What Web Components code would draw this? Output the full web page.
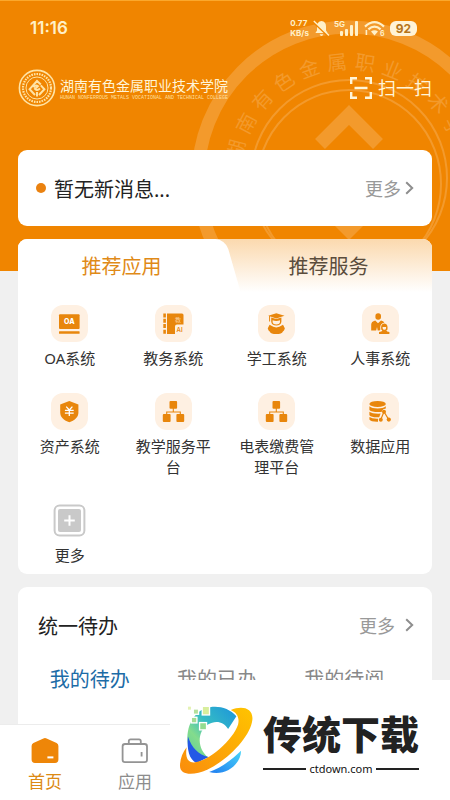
<!DOCTYPE html>
<html lang="zh-CN">
<head>
<meta charset="UTF-8">
<meta name="viewport" content="width=device-width, initial-scale=1">
<title>首页</title>
<style>
  body {
    margin: 0;
    background: #f0f0f0;
    color: #333;
    font-family: "Noto Sans", "Noto Sans CJK SC", sans-serif;
  }
</style>
</head>
<body>
<portal-app>
  <portal-hero slot="hero">
    <status-bar time="11:16" battery="92"></status-bar>
    <school-header></school-header>
  </portal-hero>
  <notice-card>暂无新消息...</notice-card>
  <app-panel>
    <app-item icon="oa">OA系统</app-item>
    <app-item icon="book">教务系统</app-item>
    <app-item icon="student">学工系统</app-item>
    <app-item icon="people">人事系统</app-item>
    <app-item icon="shield">资产系统</app-item>
    <app-item icon="tree">教学服务平台</app-item>
    <app-item icon="tree">电表缴费管理平台</app-item>
    <app-item icon="data">数据应用</app-item>
    <app-item icon="plus" plain>更多</app-item>
  </app-panel>
  <todo-card></todo-card>
  <tab-bar slot="nav">
    <tab-item icon="home" active>首页</tab-item>
    <tab-item icon="bag">应用</tab-item>
  </tab-bar>
  <site-mark slot="mark">传统下载</site-mark>
</portal-app>

<script>
  const RESET = `
    :host, * { box-sizing: border-box; }
    button {
      margin: 0; padding: 0; border: 0;
      background: none; color: inherit; font: inherit;
      cursor: pointer;
    }
    svg { display: block; flex: none; }
  `;

  const CHEVRON = `
    <svg width="9" height="14" viewBox="0 0 9 14" fill="none" stroke="#8e8e8e" stroke-width="2">
      <path d="M1.2 1.2 7.2 7 1.2 12.8"/>
    </svg>`;

  const TREE = `
    <rect x="14.5" y="8" width="7.6" height="7.8" rx="1"/>
    <rect x="7.8" y="21" width="7.8" height="8" rx="1"/>
    <rect x="21.4" y="21" width="7.8" height="8" rx="1"/>
    <path d="M18.3 15V19M11.7 21.5V19H25.3V21.5" fill="none" stroke="#e8860c" stroke-width="1.1"/>`;

  const APP_ICONS = {
    oa: `
      <rect x="8" y="9.3" width="20.6" height="14.8" rx="1"/>
      <rect x="8" y="26.2" width="20.6" height="2.6" rx=".6"/>
      <text x="18.3" y="19.4" font-family="Inter, sans-serif" font-size="7" font-weight="800" text-anchor="middle" fill="#fff">OA</text>`,
    book: `
      <path d="M8.3 8.6h2.6v4H8.3zM8.3 13.8h2.6v4H8.3zM8.3 19h2.6v4H8.3zM8.3 24.8h2.6v4H8.3z"/>
      <path d="M12 8.5H27a1.5 1.5 0 0 1 1.5 1.5V19.4H22a2 2 0 0 0-2 2V29H12Z"/>
      <text x="23" y="16.6" font-size="6" text-anchor="middle" fill="#fbd3a0">教</text>
      <text x="24.6" y="27" font-family="Inter, sans-serif" font-size="6" font-weight="600" text-anchor="middle">AI</text>`,
    student: `
      <path d="M18.3 8.2 26.5 10.8 18.3 13.4 10.2 10.8Z"/>
      <path d="M11.6 11V16.5" fill="none" stroke="#e8860c" stroke-width="1"/>
      <path d="M13.2 12.4V16.6C13.2 19 15.4 20.6 18.3 20.6S23.4 19 23.4 16.6V12.4L18.3 14Z M14.6 15.3V17.3C15 19 16.4 19.5 18.3 19.5S21.6 19 22 17.3V15.3Q18.3 16.6 14.6 15.3Z" fill-rule="evenodd"/>
      <path d="M11.6 19.8Q15.6 22.4 18.3 22.4T25 19.8L26.2 22Q27.6 23.4 26 25.4L24.9 26.4Q23.8 29 18.3 29T11.7 26.4L10.6 25.4Q9 23.4 10.4 22Z"/>`,
    people: `
      <rect x="13.4" y="8.2" width="5.6" height="6.6" rx="2.7"/>
      <path d="M9.2 25.5V19.5Q9.2 16.4 13.2 15.4L16 18.2 19 15.4Q21.4 15.8 22.4 17.4 18.2 18.4 18.2 22.4L18.4 24.6 17.6 25.5H15.7L15 22 14.2 25.5Z"/>
      <path d="M19.2 24.4Q18.4 18.4 22.3 18.4T25.5 24.4L24.3 25.4Q24.6 26.4 27.4 27V29H17V27Q20 26.6 20.4 25.4Z M20.6 22V23.2Q21 24.8 22.4 24.8T24.1 23.2V22Z" fill-rule="evenodd"/>`,
    shield: `
      <path d="M18.3 8 27.4 11.6V19.5C27.4 24.5 23.4 27.6 18.3 29.2 13.2 27.6 9.2 24.5 9.2 19.5V11.6Z"/>
      <path d="M15.2 13.6 18.3 17 21.4 13.6M18.3 17V23M13.9 17.4H22.7M13.9 20.2H22.7" fill="none" stroke="#fff" stroke-width="1.3"/>`,
    tree: TREE,
    data: `
      <ellipse cx="15.6" cy="10.9" rx="8.2" ry="3"/>
      <path d="M7.4 13.2Q10 15.4 15.6 15.4T23.8 13.2V15.4Q20.8 15.6 19.8 18.2L19.7 19Q10 19.6 7.4 17Z"/>
      <path d="M7.4 18.8Q10.4 21 18.6 20.6L17.2 24.2Q10 24.8 7.4 22.2Z"/>
      <path d="M7.4 24Q10 26 16 25.8L16 28.8Q9 29 7.4 26.6Z"/>
      <path d="M22 18.8 18.8 26.4M22 18.8 26.6 26.4" fill="none" stroke="#e8860c" stroke-width="1.2"/>
      <circle cx="22" cy="18.8" r="2"/><circle cx="18.8" cy="26.8" r="2"/><circle cx="26.8" cy="26.6" r="2.1"/>`,
    plus: `
      <rect x="3.6" y="3.6" width="29.8" height="29.8" rx="5" fill="none" stroke="#c9c9c9" stroke-width="2"/>
      <rect x="7" y="7" width="23" height="23" rx="2" fill="#c9c9c9"/>
      <path d="M18.5 13.2V23.8M13.2 18.5H23.8" stroke="#fff" stroke-width="2"/>`
  };

  class PortalApp extends HTMLElement {
    constructor() {
      super();
      this.attachShadow({ mode: "open" });
    }

    connectedCallback() {
      this.shadowRoot.innerHTML = `
        <style>
          ${RESET}
          :host {
            display: flex;
            flex-direction: column;
            height: 100vh;
            position: relative;
          }
          .page {
            flex: 1;
            min-height: 0;
            overflow: hidden;
            display: grid;
            align-content: start;
          }
          main {
            display: grid;
            gap: 13px;
            padding: 0 18px;
            margin-top: -121px;
            position: relative;
          }
        </style>
        <div class="page">
          <slot name="hero"></slot>
          <main><slot></slot></main>
        </div>
        <slot name="nav"></slot>
        <slot name="mark"></slot>
      `;
    }
  }

  class PortalHero extends HTMLElement {
    constructor() {
      super();
      this.attachShadow({ mode: "open" });
    }

    connectedCallback() {
      // characters of the crest, spread along the ring
      const ring = [..."湖南有色金属职业技术学"].map((c, i) => {
        const angle = -76 + i * 14;
        return `<text transform="rotate(${angle} 160 160)" x="160" y="51" text-anchor="middle">${c}</text>`;
      }).join("");

      this.shadowRoot.innerHTML = `
        <style>
          ${RESET}
          :host {
            display: flex;
            flex-direction: column;
            height: 271px;
            background: #f08500;
            border-top: 1px solid #fba82c;
            position: relative;
            overflow: hidden;
          }
          .crest {
            position: absolute;
            top: 17px;
            right: -59px;
          }
          ::slotted(*) { position: relative; }
        </style>
        <svg class="crest" width="320" height="320" viewBox="0 0 320 320" fill="none" stroke="#f39a2c" aria-hidden="true">
          <circle cx="160" cy="160" r="151" stroke-width="13"/>
          <circle cx="160" cy="160" r="98" stroke-width="2"/>
          <ellipse cx="160" cy="166" rx="92" ry="94" stroke-width="2"/>
          <path d="M131 126 160 97 189 126" stroke-width="14"/>
          <path d="M132 194H188L160 222Z" fill="#f39a2c" stroke="none"/>
          <g fill="#f39a2c" stroke="none" font-size="20">${ring}</g>
        </svg>
        <slot></slot>
      `;
    }
  }

  class StatusBar extends HTMLElement {
    constructor() {
      super();
      this.attachShadow({ mode: "open" });
    }

    connectedCallback() {
      const time = this.getAttribute("time") || '';
      const battery = this.getAttribute("battery") || '';

      this.shadowRoot.innerHTML = `
        <style>
          ${RESET}
          :host {
            display: flex;
            align-items: center;
            justify-content: space-between;
            height: 54px;
            padding: 0 33px 0 30px;
            color: #fff0c8;
            font-family: Inter, sans-serif;
          }
          .time { font-size: 17px; font-weight: 600; }
          .right { display: flex; align-items: center; gap: 4px; }
          .speed {
            font-size: 8px;
            line-height: 10px;
            font-weight: 700;
          }
          .speed span { display: block; }
          .signal { display: flex; align-items: flex-start; }
          .signal span { font-size: 8px; line-height: 8px; font-weight: 700; }
          .signal svg { margin-left: -5px; }
          .battery {
            width: 27px;
            border-radius: 6px;
            background: #fff3d6;
            color: #b5741a;
            font-size: 12px;
            line-height: 15px;
            font-weight: 700;
            text-align: center;
          }
        </style>
        <span class="time">${time}</span>
        <div class="right">
          <div class="speed"><span>0.77</span><span>KB/s</span></div>
          <svg width="17" height="17" viewBox="0 0 17 17">
            <path d="M8.5 1Q13 1.6 13 6.6V10.4L14.6 13H2.4L4 10.4V6.6Q4 1.6 8.5 1ZM6.6 14.2H10.4Q9.8 16 8.5 16T6.6 14.2Z" fill="#fff0c8"/>
            <path d="M.8 2.4 15.2 16" stroke="#f08500" stroke-width="2"/>
            <path d="M.8 1 16 15.4" stroke="#fff0c8" stroke-width="1.4"/>
          </svg>
          <div class="signal">
            <span>5G</span>
            <svg width="20" height="16" viewBox="0 0 20 16" fill="#fff0c8">
              <rect x="0" y="11" width="3" height="5" rx="1"/><rect x="5" y="9" width="3" height="7" rx="1"/>
              <rect x="10" y="5" width="3" height="11" rx="1"/><rect x="15" y="1" width="3" height="15" rx="1"/>
            </svg>
          </div>
          <svg width="22" height="17" viewBox="0 0 22 17" fill="none" stroke="#fff0c8" stroke-width="2.2">
            <path d="M1 6.6Q10.5-2.4 20 6.6M4.4 9.4Q10.5 4 16.6 9.4"/>
            <path d="M10.5 15.4 7 11.6Q10.5 9 14 11.6Z" fill="#fff0c8" stroke="none"/>
            <path d="M2.4 10V15" stroke-width="1.6"/>
            <text x="16" y="16" font-size="7" font-weight="700" fill="#fff0c8" stroke="none">6</text>
          </svg>
          <span class="battery">${battery}</span>
        </div>
      `;
    }
  }

  class SchoolHeader extends HTMLElement {
    constructor() {
      super();
      this.attachShadow({ mode: "open" });
    }

    connectedCallback() {
      this.shadowRoot.innerHTML = `
        <style>
          ${RESET}
          :host {
            display: flex;
            align-items: center;
            justify-content: space-between;
            height: 66px;
            padding: 0 18px;
            color: #fff5d8;
          }
          .brand { display: flex; align-items: center; gap: 4px; }
          .name { font-family: "Noto Sans CJK SC", sans-serif; font-size: 14px; line-height: 20px; }
          .en {
            font-family: "Liberation Mono", monospace;
            font-size: 5px;
            line-height: 7px;
            color: #ffdf9c;
            white-space: nowrap;
          }
          .scan { display: flex; align-items: center; gap: 5px; font-size: 18px; line-height: 26px; }
        </style>
        <div class="brand">
          <svg width="38" height="38" viewBox="0 0 38 38" fill="none" stroke="#ffe3a4">
            <circle cx="19" cy="19" r="17.6" stroke-width="1.6"/>
            <circle cx="19" cy="19" r="14" stroke-width="2.2" stroke-dasharray="1.6 1"/>
            <circle cx="19" cy="19" r="11" stroke-width="1"/>
            <path d="M17 26 11.6 20.2 19 12 22.8 15.6M21 26 26.4 20.2 22.8 16.4M15.6 18.4Q17.6 15.4 20 17.2L17 20Q18.6 22.2 22 19.4M19 27.4V23" stroke-width="2"/>
          </svg>
          <div>
            <div class="name">湖南有色金属职业技术学院</div>
            <div class="en">HUNAN NONFERROUS METALS VOCATIONAL AND TECHNICAL COLLEGE</div>
          </div>
        </div>
        <button class="scan" type="button">
          <svg width="24" height="24" viewBox="0 0 24 24" fill="none" stroke="#fff5d8" stroke-width="2.4">
            <path d="M8 2.2H2.2V8M16 2.2H21.8V8M8 21.8H2.2V16M16 21.8H21.8V16M5.5 12H18.5"/>
          </svg>
          <span>扫一扫</span>
        </button>
      `;
    }
  }

  class NoticeCard extends HTMLElement {
    constructor() {
      super();
      this.attachShadow({ mode: "open" });
    }

    connectedCallback() {
      this.shadowRoot.innerHTML = `
        <style>
          ${RESET}
          :host {
            display: flex;
            align-items: center;
            gap: 8px;
            height: 76px;
            padding: 0 18px;
            background: #fff;
            border-radius: 9px;
            font-size: 20px;
            color: #222;
          }
          i { width: 10px; height: 10px; border-radius: 50%; background: #ea8210; }
          .text { flex: 1; }
          button { display: flex; align-items: center; gap: 4px; font-size: 18px; color: #999; }
        </style>
        <i></i>
        <span class="text"><slot></slot></span>
        <button type="button">更多 ${CHEVRON}</button>
      `;
    }
  }

  class AppPanel extends HTMLElement {
    constructor() {
      super();
      this.attachShadow({ mode: "open" });
    }

    connectedCallback() {
      this.shadowRoot.innerHTML = `
        <style>
          ${RESET}
          :host {
            display: block;
            background: #fff;
            border-radius: 9px;
            overflow: hidden;
          }
          .tabs {
            display: grid;
            grid-template-columns: 1fr 1fr;
            height: 53px;
            background: linear-gradient(#fbd9ae, #fff);
            font-size: 20px;
          }
          .tabs button { position: relative; color: #5a4c3c; }
          .tabs .on {
            margin-right: 16px;
            padding-left: 16px;
            color: #e08a18;
            background: #fff;
          }
          /* slanted edge of the open tab */
          .on::after {
            content: "";
            position: absolute;
            top: 0; right: -24px; bottom: 0;
            width: 40px;
            background: #fff;
            border-top-right-radius: 10px;
            transform: skewX(16deg);
          }
          .grid {
            display: grid;
            grid-template-columns: repeat(4, 1fr);
            row-gap: 24px;
            padding: 13px 0 8px;
          }
        </style>
        <div class="tabs">
          <button class="on" type="button">推荐应用</button>
          <button type="button">推荐服务</button>
        </div>
        <div class="grid"><slot></slot></div>
      `;
    }
  }

  class AppItem extends HTMLElement {
    constructor() {
      super();
      this.attachShadow({ mode: "open" });
    }

    connectedCallback() {
      const icon = APP_ICONS[this.getAttribute("icon")] || '';

      this.shadowRoot.innerHTML = `
        <style>
          ${RESET}
          :host { display: block; padding: 0 12px; }
          button {
            display: flex;
            flex-direction: column;
            align-items: center;
            gap: 6px;
            width: 100%;
            font-size: 15px;
            line-height: 21px;
          }
          svg { background: #fef0e2; border-radius: 12px; }
          :host([plain]) svg { background: none; }
        </style>
        <button type="button">
          <svg width="37" height="37" viewBox="0 0 37 37" fill="#e8860c">${icon}</svg>
          <span><slot></slot></span>
        </button>
      `;
    }
  }

  class TodoCard extends HTMLElement {
    constructor() {
      super();
      this.attachShadow({ mode: "open" });
    }

    connectedCallback() {
      this.shadowRoot.innerHTML = `
        <style>
          ${RESET}
          :host {
            display: block;
            min-height: 200px;
            background: #fff;
            border-radius: 9px;
          }
          header {
            display: flex;
            align-items: center;
            justify-content: space-between;
            height: 76px;
            padding: 0 18px 0 20px;
          }
          h2 { margin: 0; font-size: 20px; font-weight: 400; color: #222; }
          header button { display: flex; align-items: center; gap: 10px; font-size: 18px; color: #999; }
          nav {
            display: grid;
            grid-template-columns: repeat(3, 1fr);
            padding: 0 24px 0 8px;
            font-size: 20px;
            line-height: 34px;
            color: #888;
          }
          nav .on { color: #1c6ba6; }
        </style>
        <header>
          <h2>统一待办</h2>
          <button type="button">更多 ${CHEVRON}</button>
        </header>
        <nav>
          <button class="on" type="button">我的待办</button>
          <button type="button">我的已办</button>
          <button type="button">我的待阅</button>
        </nav>
      `;
    }
  }

  class TabBar extends HTMLElement {
    constructor() {
      super();
      this.attachShadow({ mode: "open" });
    }

    connectedCallback() {
      this.shadowRoot.innerHTML = `
        <style>
          ${RESET}
          :host {
            display: grid;
            grid-template-columns: repeat(5, 1fr);
            height: 76px;
            background: #fff;
            border-top: 1px solid #ececec;
          }
        </style>
        <slot></slot>
      `;
    }
  }

  const TAB_ICONS = {
    home: `
      <path d="M12.4 1.4Q14 .6 15.6 1.4L25.6 6Q27.4 7 27.4 9V22.6Q27.4 26 24 26H4Q.6 26 .6 22.6V9Q.6 7 2.4 6Z" fill="#ee8608"/>
      <path d="M16.4 20.4H22.4" stroke="#fff" stroke-width="2"/>`,
    bag: `
      <rect x="1.6" y="7" width="24.4" height="18.2" rx="2.4" fill="none" stroke="#949494" stroke-width="1.8"/>
      <path d="M7.8 7V4.2Q7.8 2.4 9.6 2.4H18Q19.8 2.4 19.8 4.2V7M20.6 15V19.6" fill="none" stroke="#949494" stroke-width="1.8"/>`
  };

  class TabItem extends HTMLElement {
    constructor() {
      super();
      this.attachShadow({ mode: "open" });
    }

    connectedCallback() {
      this.shadowRoot.innerHTML = `
        <style>
          ${RESET}
          :host { display: block; color: #8c8c8c; }
          :host([active]) { color: #dc8a14; }
          button {
            display: flex;
            flex-direction: column;
            align-items: center;
            gap: 6px;
            width: 100%;
            padding-top: 12px;
            font-size: 17px;
            line-height: 24px;
          }
        </style>
        <button type="button">
          <svg width="28" height="27" viewBox="0 0 28 27">${TAB_ICONS[this.getAttribute("icon")] || ''}</svg>
          <span><slot></slot></span>
        </button>
      `;
    }
  }

  class SiteMark extends HTMLElement {
    constructor() {
      super();
      this.attachShadow({ mode: "open" });
    }

    connectedCallback() {
      this.shadowRoot.innerHTML = `
        <style>
          ${RESET}
          :host {
            display: flex;
            align-items: center;
            gap: 8px;
            position: absolute;
            right: 0; bottom: 0;
            width: 280px;
            height: 120px;
            padding-left: 8px;
            background: #fff;
            color: #222;
          }
          .title {
            font-family: "Noto Sans CJK SC", sans-serif;
            font-size: 39px;
            line-height: 58px;
            font-weight: 900;
          }
          .site {
            display: flex;
            align-items: center;
            gap: 3px;
            font-size: 11px;
            line-height: 16px;
            color: #111;
          }
          .site::before, .site::after {
            content: "";
            flex: 1;
            height: 2px;
            background: #222;
          }
        </style>
        <svg width="77" height="73" viewBox="25 70 230 220">
          <defs>
            <linearGradient id="c" x1="1" y1="0" x2="0" y2="1">
              <stop offset="0" stop-color="#1c94dc"/>
              <stop offset=".45" stop-color="#35bcc4"/>
              <stop offset=".7" stop-color="#84dc8c"/>
              <stop offset="1" stop-color="#58cc9c"/>
            </linearGradient>
            <linearGradient id="o" x1="1" y1="0" x2="0" y2="1">
              <stop offset="0" stop-color="#ffc400"/>
              <stop offset="1" stop-color="#fa8c0c"/>
            </linearGradient>
            <linearGradient id="b" x1="0" y1="1" x2="1" y2="0">
              <stop offset="0" stop-color="#1f7cf0"/>
              <stop offset="1" stop-color="#48d4f8"/>
            </linearGradient>
          </defs>
          <path d="M200 107C168 70 110 70 80 100C42 138 46 205 74 238L116 232C82 206 80 154 114 132C138 117 162 124 175 145Z" fill="url(#c)"/>
          <path d="M54 168C50 208 58 238 80 248L116 230C86 224 64 200 54 168Z" fill="#2358e6"/>
          <path d="M118 275C155 262 190 235 214 211C214 250 168 290 118 275Z" fill="url(#b)"/>
          <path d="M183 88C215 74 252 80 248 118C243 165 180 235 112 268C72 286 30 286 30 256C30 236 38 215 50 200C46 226 50 246 72 246C114 246 192 176 205 132C210 112 202 96 183 88Z" fill="url(#o)"/>
          <g stroke="#fff" stroke-width="4">
            <rect x="52" y="76" width="13" height="13" fill="#e4f2b4"/>
            <rect x="70" y="85" width="16" height="16" fill="#b4e09c"/>
            <rect x="97" y="77" width="22" height="26" fill="#d8ee9c"/>
            <rect x="64" y="110" width="17" height="17" fill="#a4dc94"/>
            <rect x="89" y="126" width="21" height="22" fill="#94dc90"/>
          </g>
        </svg>
        <div>
          <div class="title"><slot></slot></div>
          <div class="site">ctdown.com</div>
        </div>
      `;
    }
  }

  customElements.define('portal-app', PortalApp);
  customElements.define('portal-hero', PortalHero);
  customElements.define('status-bar', StatusBar);
  customElements.define('school-header', SchoolHeader);
  customElements.define('notice-card', NoticeCard);
  customElements.define('app-panel', AppPanel);
  customElements.define('app-item', AppItem);
  customElements.define('todo-card', TodoCard);
  customElements.define('tab-bar', TabBar);
  customElements.define('tab-item', TabItem);
  customElements.define('site-mark', SiteMark);
</script>
</body>
</html>
